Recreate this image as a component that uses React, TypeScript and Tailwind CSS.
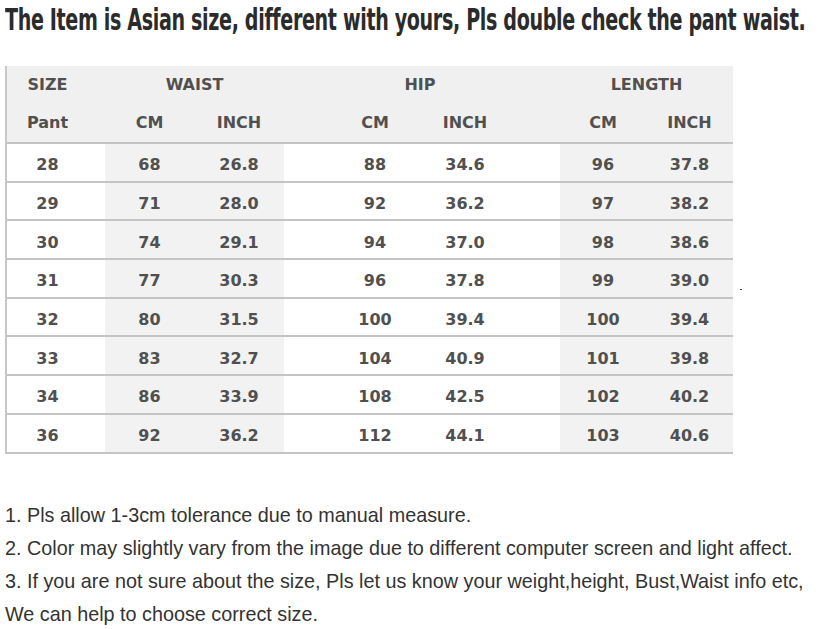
import React from 'react';

const rows = [
  ['28', '68', '26.8', '88', '34.6', '96', '37.8'],
  ['29', '71', '28.0', '92', '36.2', '97', '38.2'],
  ['30', '74', '29.1', '94', '37.0', '98', '38.6'],
  ['31', '77', '30.3', '96', '37.8', '99', '39.0'],
  ['32', '80', '31.5', '100', '39.4', '100', '39.4'],
  ['33', '83', '32.7', '104', '40.9', '101', '39.8'],
  ['34', '86', '33.9', '108', '42.5', '102', '40.2'],
  ['36', '92', '36.2', '112', '44.1', '103', '40.6'],
];

const notes = [
  '1. Pls allow 1-3cm tolerance due to manual measure.',
  '2. Color may slightly vary from the image due to different computer screen and light affect.',
  '3. If you are not sure about the size, Pls let us know your weight,height, Bust,Waist info etc,',
  'We can help to choose correct size.',
];

const cell = 'flex items-center justify-center';
const cols = 'grid grid-cols-[81px_17px_89px_90px_46px_90px_90px_50px_86px_87px]';

export default function App() {
  return (
    <div className="relative w-[820px] h-[629px] bg-white overflow-hidden">
      <div className="pl-[5px] pt-[3px] h-[40px] overflow-visible">
        <h1
          className="origin-left scale-x-[0.708] whitespace-nowrap text-[30px] leading-[34px] font-bold text-[#2b2b2b] tracking-[-0.5px]"
          style={{ fontFamily: '"DejaVu Sans Condensed", "DejaVu Sans", sans-serif' }}
        >
          The Item is Asian size, different with yours, Pls double check the pant waist.
        </h1>
      </div>

      <div
        className="ml-[5px] mt-[26px] w-[728px] border-l-2 border-[#c8c8c8] text-[#505050] font-bold text-[16px]"
        style={{ fontFamily: '"DejaVu Sans", sans-serif' }}
      >
        <div className="bg-[#f0f0f0]">
          <div className="grid grid-cols-[81px_17px_179px_46px_180px_50px_173px] h-[38px]">
            <div className={cell}>SIZE</div>
            <div />
            <div className={cell}>WAIST</div>
            <div />
            <div className={cell}>HIP</div>
            <div />
            <div className={cell}>LENGTH</div>
          </div>
          <div className={`${cols} h-[38px]`}>
            <div className={cell}>Pant</div>
            <div />
            <div className={cell}>CM</div>
            <div className={cell}>INCH</div>
            <div />
            <div className={cell}>CM</div>
            <div className={cell}>INCH</div>
            <div />
            <div className={cell}>CM</div>
            <div className={cell}>INCH</div>
          </div>
        </div>
        {rows.map((r, i) => (
          <div key={i} className={`${cols} h-[38.7px] border-t-2 border-[#c4c4c4]`}>
            <div className={`${cell} pt-[6px]`}>{r[0]}</div>
            <div />
            <div className={`${cell} pt-[6px] bg-[#f2f2f2]`}>{r[1]}</div>
            <div className={`${cell} pt-[6px] bg-[#f2f2f2]`}>{r[2]}</div>
            <div />
            <div className={`${cell} pt-[6px]`}>{r[3]}</div>
            <div className={`${cell} pt-[6px]`}>{r[4]}</div>
            <div />
            <div className={`${cell} pt-[6px] bg-[#f2f2f2]`}>{r[5]}</div>
            <div className={`${cell} pt-[6px] bg-[#f2f2f2]`}>{r[6]}</div>
          </div>
        ))}
        <div className="border-t-2 border-[#c4c4c4]" />
      </div>

      <div className="absolute left-[740px] top-[289px] w-[2px] h-[1px] bg-[#444]" />

      <div
        className="mt-[45px] pl-[5px] text-[19.8px] leading-[33px] text-[#333]"
        style={{ fontFamily: '"Liberation Sans", Arial, sans-serif' }}
      >
        {notes.map((n, i) => (
          <p key={i} className="whitespace-nowrap">{n}</p>
        ))}
      </div>
    </div>
  );
}
